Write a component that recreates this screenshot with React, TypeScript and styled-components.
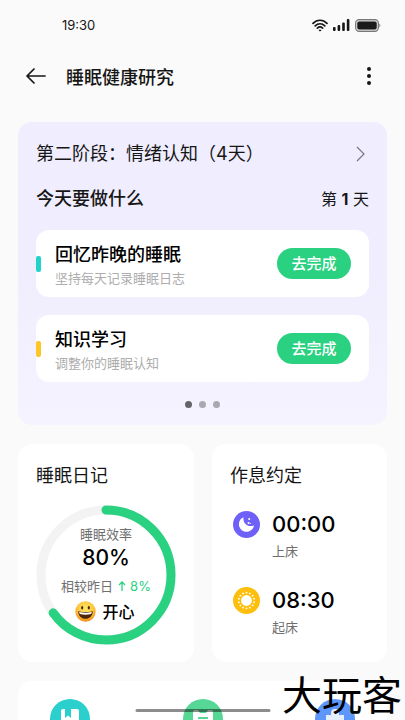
import React from "react";
import styled, { createGlobalStyle } from "styled-components";

const GlobalStyle = createGlobalStyle`
  * { box-sizing: border-box; }
  body {
    margin: 0;
    background: #fafafa;
    color: #161616;
    font-family: Inter, "Noto Sans CJK SC", sans-serif;
  }
  h1, h2, h3, p, ul, dl, dd, dt { margin: 0; padding: 0; font-weight: inherit; }
  ul { list-style: none; }
  button { border: 0; padding: 0; background: none; color: inherit; font: inherit; cursor: pointer; }
  svg { display: block; }
`;

const Screen = styled.div`
  position: relative;
  height: 100vh;
  overflow: hidden;
`;

const StatusBar = styled.div`
  display: flex;
  align-items: center;
  justify-content: space-between;
  height: 50px;
  padding: 0 24px 0 62px;
  font-size: 13px;
`;

const StatusIcons = styled.div`
  display: flex;
  align-items: center;
  gap: 5px;
`;

const Header = styled.header`
  display: flex;
  align-items: center;
  height: 52px;
  padding: 0 24px;
`;

const IconButton = styled.button`
  display: grid;
  place-items: center;
  width: 24px;
  height: 32px;
`;

const PageTitle = styled.h1`
  flex: 1;
  padding: 3px 0 0 18px;
  font-size: 18px;
  line-height: 26px;
  font-weight: 500;
`;

const Main = styled.main`
  display: grid;
  gap: 19px;
  padding: 20px 18px 0;
`;

const Panel = styled.section`
  padding: 19px 18px 17px;
  border-radius: 14px;
  background: linear-gradient(#efedfe, #f0eefe 50%, #f5f3ff);
`;

const StageLink = styled.a`
  display: flex;
  align-items: center;
  justify-content: space-between;
  padding-right: 4px;
  color: inherit;
  font-size: 18px;
  line-height: 26px;
  text-decoration: none;
`;

const TodayRow = styled.div`
  display: flex;
  align-items: center;
  justify-content: space-between;
  margin: 18px 0 17px;
  font-size: 16px;
  line-height: 28px;
`;

const TodayTitle = styled.h2`
  font-size: 18px;
  font-weight: 500;
`;

const TaskList = styled.ul`
  display: grid;
  gap: 18px;
`;

const Task = styled.li`
  display: flex;
  align-items: center;
  height: 67px;
  padding-right: 18px;
  border-radius: 13px;
  background: #fff;
`;

const TaskMark = styled.span<{ $color: string }>`
  width: 5px;
  height: 16px;
  border-radius: 2px;
  background: ${(p) => p.$color};
`;

const TaskText = styled.div`
  display: grid;
  flex: 1;
  padding: 2px 0 0 14px;
`;

const TaskTitle = styled.h3`
  font-size: 18px;
  line-height: 26px;
  font-weight: 500;
  color: #000;
`;

const TaskNote = styled.p`
  font-size: 13px;
  line-height: 20px;
  color: #adadad;
`;

const GoButton = styled.button`
  width: 74px;
  height: 31px;
  border-radius: 16px;
  background: #2ad181;
  color: #fff;
  font-size: 15px;
  font-weight: 500;
  line-height: 31px;
`;

const Dots = styled.div`
  display: flex;
  justify-content: center;
  gap: 7px;
  margin-top: 19px;
`;

const Dot = styled.span<{ $active?: boolean }>`
  width: 7px;
  height: 7px;
  border-radius: 50%;
  background: ${(p) => (p.$active ? "#646368" : "#a9a8af")};
`;

const Columns = styled.div`
  display: grid;
  grid-template-columns: 1fr 1fr;
  gap: 18px;
`;

const Card = styled.section`
  padding: 19px 18px 17px;
  border-radius: 14px;
  background: #fff;
`;

const CardTitle = styled.h2`
  font-size: 18px;
  line-height: 26px;
`;

const Gauge = styled.div`
  display: grid;
  justify-content: center;
  margin-top: 16px;
  > * { grid-area: 1 / 1; }
`;

const GaugeText = styled.div`
  display: flex;
  flex-direction: column;
  align-items: center;
  padding-top: 19px;
  font-size: 13px;
  line-height: 20px;
  color: #6f6f6f;
`;

const Percent = styled.strong`
  font-size: 21px;
  line-height: 28px;
  font-weight: 500;
  color: #000;
`;

const Compare = styled.div`
  display: flex;
  align-items: center;
  gap: 5px;
  margin: 4px 0 5px;
`;

const Rise = styled.span`
  display: flex;
  align-items: center;
  gap: 4px;
  color: #2ad181;
`;

const Mood = styled.div`
  display: flex;
  align-items: center;
  gap: 6px;
  padding-right: 2px;
  font-size: 16px;
  font-weight: 500;
  color: #000;
`;

const Schedule = styled.dl`
  display: grid;
  gap: 25px;
  margin-top: 21px;
  padding-left: 3px;
`;

const Appointment = styled.div`
  display: grid;
  grid-template-columns: 27px 1fr;
  align-items: center;
  column-gap: 12px;
  row-gap: 3px;
`;

const Time = styled.dd`
  font-size: 22px;
  line-height: 28px;
  font-weight: 500;
  color: #000;
`;

const TimeLabel = styled.dt`
  grid-column: 2;
  order: 1;
  font-size: 13px;
  line-height: 20px;
  color: #6f6f6f;
`;

const Shortcuts = styled.nav`
  display: flex;
  justify-content: space-between;
  padding: 18px 32px;
  border-radius: 14px;
  background: #fff;
`;

const Shortcut = styled.button<{ $color: string }>`
  display: grid;
  place-items: center;
  width: 40px;
  height: 40px;
  border-radius: 50%;
  background: ${(p) => p.$color};
`;

const HomeIndicator = styled.div`
  position: absolute;
  bottom: 8px;
  left: 50%;
  width: 135px;
  height: 3px;
  border-radius: 2px;
  background: rgba(0, 0, 0, 0.45);
  transform: translateX(-50%);
`;

const Watermark = styled.div`
  position: absolute;
  right: 3px;
  bottom: 4px;
  font-size: 40px;
  line-height: 40px;
  color: #000;
`;

const RING = 2 * Math.PI * 65;

const tasks = [
  { title: "回忆昨晚的睡眠", note: "坚持每天记录睡眠日志", color: "#22d1cb" },
  { title: "知识学习", note: "调整你的睡眠认知", color: "#fdc526" },
];

const WifiIcon = () => (
  <svg width="16" height="13" viewBox="0 0 16 13" fill="none" stroke="#161616" strokeWidth="1.7" strokeLinecap="round">
    <path d="M1 4.4C5 .2 11 .2 15 4.4M3.200 6.900c2.800-2.900 6.800-2.900 9.600 0M5.400 9.200c1.600-1.500 3.600-1.500 5.200 0" />
    <circle cx="8" cy="11.4" r=".7" fill="#161616" strokeWidth=".8" />
  </svg>
);

const SignalIcon = () => (
  <svg width="17" height="12" viewBox="0 0 17 12" fill="#161616">
    <rect x="0" y="8" width="2.6" height="4" rx="1" />
    <rect x="4.6" y="6" width="2.6" height="6" rx="1" />
    <rect x="9.2" y="3.4" width="2.6" height="8.6" rx="1" />
    <rect x="13.8" y="0" width="2.6" height="12" rx="1" />
  </svg>
);

const BatteryIcon = () => (
  <svg width="26" height="13" viewBox="0 0 26 13">
    <rect x=".6" y=".6" width="22.8" height="11.8" rx="3.6" fill="#d8d8d8" stroke="#777" strokeWidth="1.1" />
    <rect x="2.3" y="2.6" width="19.4" height="7.8" rx="2" fill="#1b1b1b" />
    <path d="M24.400 4.500c1.200.6 1.200 3.400 0 4z" fill="#777" />
  </svg>
);

const MoonIcon = () => (
  <svg width="27" height="27" viewBox="0 0 27 27">
    <circle cx="13.5" cy="13.5" r="13.5" fill="#6f61f8" />
    <path d="M10.500 6.200C9.600 11.800 14.500 17 21 14.400A7.600 7.600 0 1 1 10.500 6.200z" fill="#fff" />
    <g fill="#fff">
      <circle cx="16.200" cy="8" r="1" />
      <circle cx="15.600" cy="12" r="1.100" />
      <circle cx="17.500" cy="12.600" r=".5" />
    </g>
  </svg>
);

const SUN_RAYS = Array.from({ length: 14 }, (_, i) => (i * 2 * Math.PI) / 14);

const SunIcon = () => (
  <svg width="27" height="27" viewBox="0 0 27 27" fill="#fff">
    <circle cx="13.5" cy="13.5" r="13.5" fill="#febf0c" />
    <circle cx="13.5" cy="13.5" r="5.4" />
    {SUN_RAYS.map((a) => (
      <circle key={a} cx={13.5 + 7.8 * Math.sin(a)} cy={13.5 + 7.8 * Math.cos(a)} r=".9" />
    ))}
  </svg>
);

const GrinIcon = () => (
  <svg width="21" height="21" viewBox="0 0 21 21">
    <defs>
      <radialGradient id="face" cx=".5" cy=".35" r=".65">
        <stop offset="0" stopColor="#ffe66a" />
        <stop offset=".6" stopColor="#fdc63a" />
        <stop offset="1" stopColor="#ef8b1c" />
      </radialGradient>
    </defs>
    <circle cx="10.5" cy="10.5" r="10.2" fill="url(#face)" />
    <ellipse cx="7.2" cy="6.8" rx="1.1" ry="1.7" fill="#4a2608" />
    <ellipse cx="13.8" cy="6.8" rx="1.1" ry="1.7" fill="#4a2608" />
    <path d="M3.200 10.200c4.600 1.200 10 1.200 14.600 0 0 4.400-3 7.600-7.300 7.600s-7.300-3.200-7.300-7.600z" fill="#50240c" />
    <path d="M4.200 11c4 .9 8.600.9 12.600 0-.1 1.100-.4 1.700-.8 2.100-3.400.7-7.600.7-11 0-.4-.4-.7-1-.8-2.100z" fill="#fff" />
  </svg>
);

export default function App() {
  return (
    <Screen>
      <GlobalStyle />
      <StatusBar>
        <span>19:30</span>
        <StatusIcons>
          <WifiIcon />
          <SignalIcon />
          <BatteryIcon />
        </StatusIcons>
      </StatusBar>
      <Header>
        <IconButton aria-label="返回">
          <svg width="20" height="16" viewBox="0 0 20 16" fill="none" stroke="#161616" strokeWidth="1.7" strokeLinecap="round" strokeLinejoin="round">
            <path d="M8 1 1 8l7 7M1 8h18" />
          </svg>
        </IconButton>
        <PageTitle>睡眠健康研究</PageTitle>
        <IconButton aria-label="更多">
          <svg width="4" height="18" viewBox="0 0 4 18" fill="#161616">
            <circle cx="2" cy="2" r="2" />
            <circle cx="2" cy="9" r="2" />
            <circle cx="2" cy="16" r="2" />
          </svg>
        </IconButton>
      </Header>
      <Main>
        <Panel>
          <StageLink href="#stage">
            第二阶段：情绪认知（4天）
            <svg width="9" height="16" viewBox="0 0 9 16" fill="none" stroke="#77767c" strokeWidth="1.2">
              <path d="m1 1 7 7-7 7" />
            </svg>
          </StageLink>
          <TodayRow>
            <TodayTitle>今天要做什么</TodayTitle>
            <span>第 <b>1</b> 天</span>
          </TodayRow>
          <TaskList>
            {tasks.map((t) => (
              <Task key={t.title}>
                <TaskMark $color={t.color} />
                <TaskText>
                  <TaskTitle>{t.title}</TaskTitle>
                  <TaskNote>{t.note}</TaskNote>
                </TaskText>
                <GoButton>去完成</GoButton>
              </Task>
            ))}
          </TaskList>
          <Dots>
            <Dot $active />
            <Dot />
            <Dot />
          </Dots>
        </Panel>
        <Columns>
          <Card>
            <CardTitle>睡眠日记</CardTitle>
            <Gauge>
              <svg width="140" height="140" viewBox="0 0 140 140" fill="none" strokeWidth="9">
                <circle cx="70" cy="70" r="65" stroke="#f3f3f3" />
                <circle
                  cx="70"
                  cy="70"
                  r="65"
                  stroke="#2ad181"
                  strokeLinecap="round"
                  strokeDasharray={`${RING * 0.65} ${RING}`}
                  transform="rotate(-90 70 70)"
                />
              </svg>
              <GaugeText>
                <span>睡眠效率</span>
                <Percent>80%</Percent>
                <Compare>
                  相较昨日
                  <Rise>
                    <svg width="8" height="10" viewBox="0 0 8 10" fill="none" stroke="#2ad181" strokeWidth="1.3">
                      <path d="M4 10V1M1 4l3-3 3 3" />
                    </svg>
                    8%
                  </Rise>
                </Compare>
                <Mood>
                  <GrinIcon />
                  开心
                </Mood>
              </GaugeText>
            </Gauge>
          </Card>
          <Card>
            <CardTitle>作息约定</CardTitle>
            <Schedule>
              <Appointment>
                <MoonIcon />
                <TimeLabel>上床</TimeLabel>
                <Time>00:00</Time>
              </Appointment>
              <Appointment>
                <SunIcon />
                <TimeLabel>起床</TimeLabel>
                <Time>08:30</Time>
              </Appointment>
            </Schedule>
          </Card>
        </Columns>
        <Shortcuts>
          <Shortcut $color="#2bcfcb" aria-label="日记">
            <svg width="20" height="20" viewBox="0 0 20 20">
              <path d="M3 0h14a2 2 0 0 1 2 2v16H1V2a2 2 0 0 1 2-2z" fill="#fff" />
              <path d="M5 0h6v9L8 6.500 5 9z" fill="#2bcfcb" />
            </svg>
          </Shortcut>
          <Shortcut $color="#56d796" aria-label="任务">
            <svg width="20" height="20" viewBox="0 0 20 20">
              <path d="M2 1h3l2 3h6l2-3h3a2 2 0 0 1 2 2v15H0V3a2 2 0 0 1 2-2z" fill="#fff" />
              <path d="M5 8h10v2H5z" fill="#56d796" />
            </svg>
          </Shortcut>
          <Shortcut $color="#5e97fb" aria-label="报告">
            <svg width="20" height="20" viewBox="0 0 20 20">
              <path d="M6 4a4 4 0 0 1 8 0v2h5v14H1V6h5z" fill="#e6efff" />
            </svg>
          </Shortcut>
        </Shortcuts>
      </Main>
      <HomeIndicator />
      <Watermark>大玩客</Watermark>
    </Screen>
  );
}
